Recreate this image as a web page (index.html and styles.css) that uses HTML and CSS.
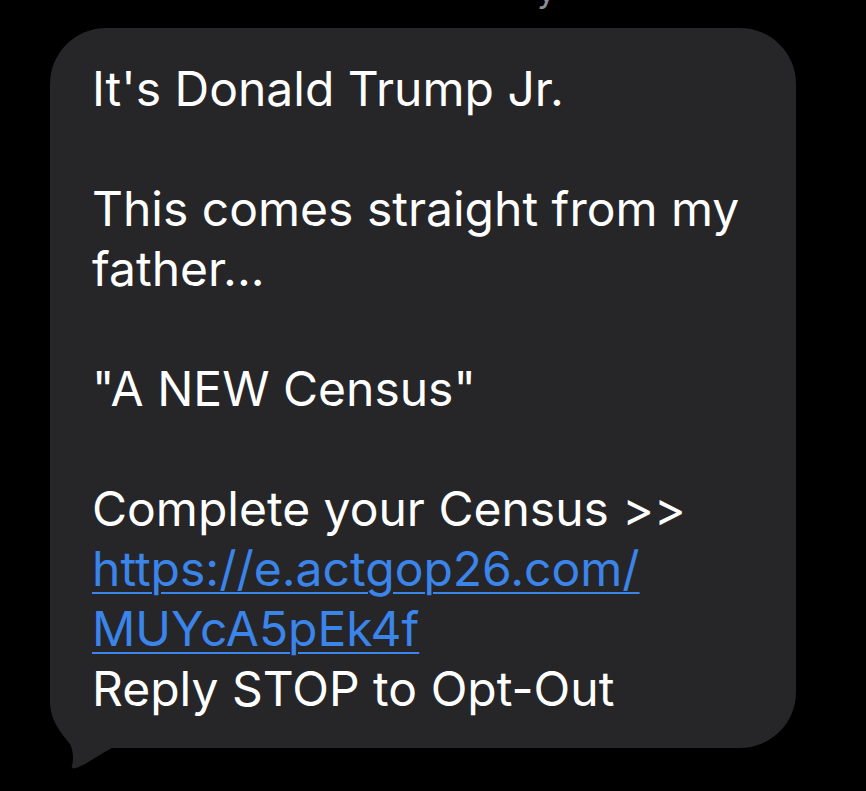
FILE: index.html
```html
<!DOCTYPE html>
<html lang="en">
<head>
<meta charset="utf-8">
<title>Message</title>
<link rel="stylesheet" href="styles.css">
</head>
<body>
<div class="thread">
  <span class="clipped">y</span>
  <div class="bubble">
    <svg class="tail" width="100" height="100" viewBox="0 0 100 100" aria-hidden="true">
      <path d="M10 0 V22 C10 42 24 56 30 64 C33 70 34 80 32 85 C31 88 33 89 36 88 C46 85 58 75 72 68 H100 V0 Z" fill="#262629"/>
    </svg>
    <p class="line">It's Donald Trump Jr.</p>
    <p class="line blank">&nbsp;</p>
    <p class="line">This comes straight from my</p>
    <p class="line">father...</p>
    <p class="line blank">&nbsp;</p>
    <p class="line">"A NEW Census"</p>
    <p class="line blank">&nbsp;</p>
    <p class="line">Complete your Census &gt;&gt;</p>
    <p class="line"><a class="link" href="#">https://e.actgop26.com/</a></p>
    <p class="line"><a class="link" href="#">MUYcA5pEk4f</a></p>
    <p class="line">Reply STOP to Opt-Out</p>
  </div>
</div>
</body>
</html>
```

FILE: styles.css
```css
html, body {
  margin: 0;
  padding: 0;
  background: #000;
}
body {
  width: 866px;
  height: 791px;
  overflow: hidden;
  font-family: "Inter", "Liberation Sans", sans-serif;
}
.thread {
  position: relative;
  padding: 28px 0 0 50px;
}
.clipped {
  position: absolute;
  left: 537px;
  top: -30px;
  font-size: 34px;
  line-height: 40px;
  color: #8e8e93;
}
.bubble {
  position: relative;
  width: 746px;
  box-sizing: border-box;
  background: #262629;
  border-radius: 56px;
  padding: 31px 0 29px 42px;
  color: #fff;
}
.line {
  position: relative;
  z-index: 1;
  margin: 0;
  font-size: 48px;
  line-height: 60px;
  white-space: nowrap;
}
.link {
  color: #3a84ea;
  text-decoration: underline;
  text-decoration-thickness: 2px;
  text-underline-offset: 6px;
}
.tail {
  position: absolute;
  z-index: 0;
  left: -10px;
  top: 652px;
  display: block;
}
```
